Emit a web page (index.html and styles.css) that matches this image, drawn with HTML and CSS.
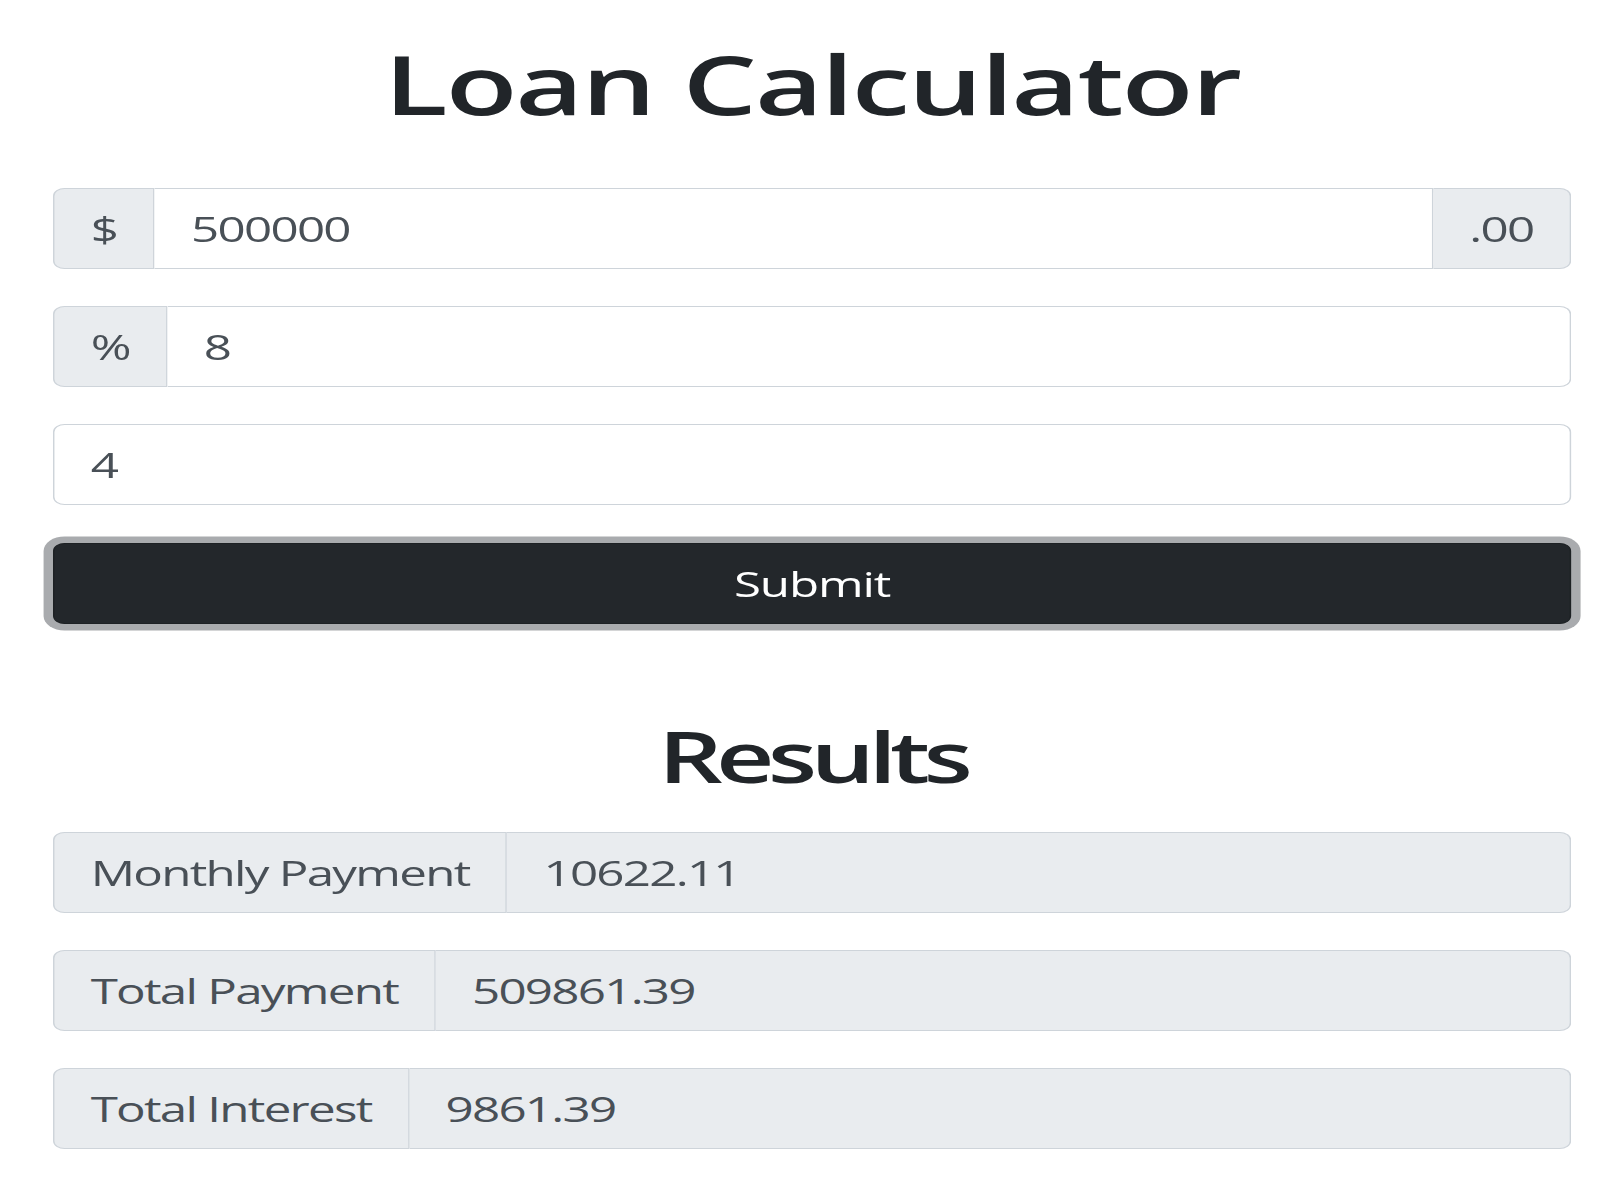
FILE: index.html
```html
<!DOCTYPE html>
<html lang="en">
<head>
<meta charset="utf-8">
<title>Loan Calculator</title>
<link rel="stylesheet" href="styles.css">
</head>
<body>
<div class="container">
  <h1 class="title">Loan Calculator</h1>
  <form class="form">
    <div class="group">
      <span class="addon addon-start">$</span>
      <input class="field field-middle" type="text" value="500000">
      <span class="addon addon-end">.00</span>
    </div>
    <div class="group">
      <span class="addon addon-start">%</span>
      <input class="field field-last" type="text" value="8">
    </div>
    <div class="group">
      <input class="field field-solo" type="text" value="4">
    </div>
    <button class="btn" type="button">Submit</button>
  </form>
  <h2 class="subtitle">Results</h2>
  <div class="results">
    <div class="group">
      <span class="addon addon-start">Monthly Payment</span>
      <input class="field field-last field-readonly" type="text" value="10622.11" readonly>
    </div>
    <div class="group">
      <span class="addon addon-start">Total Payment</span>
      <input class="field field-last field-readonly" type="text" value="509861.39" readonly>
    </div>
    <div class="group">
      <span class="addon addon-start">Total Interest</span>
      <input class="field field-last field-readonly" type="text" value="9861.39" readonly>
    </div>
  </div>
</div>
</body>
</html>
```
FILE: styles.css
```css
html, body {
  margin: 0;
  padding: 0;
  background: #ffffff;
}

body {
  font-family: "Open Sans", "Noto Sans", "Liberation Sans", sans-serif;
  color: #212529;
}

.container {
  width: 1047px;
  margin-left: 53px;
  transform: scaleX(1.45);
  transform-origin: 0 0;
}

.title {
  margin: 35px 0 56px;
  font-size: 81px;
  line-height: 97px;
  font-weight: 600;
  letter-spacing: -1.4px;
  text-align: center;
  color: #212529;
}

.subtitle {
  margin: 90px 0 34px;
  font-size: 70px;
  line-height: 84px;
  font-weight: 600;
  letter-spacing: -4.6px;
  text-align: center;
  color: #212529;
}

.form,
.results {
  display: flex;
  flex-direction: column;
  gap: 37px;
}

.group {
  display: flex;
  height: 81px;
}

.addon {
  display: flex;
  align-items: center;
  padding: 0 25px;
  background: #e9ecef;
  border: 1px solid #ced4da;
  color: #495057;
  font-size: 34px;
  letter-spacing: -1.2px;
  white-space: nowrap;
}

.addon-start {
  border-radius: 8px 0 0 8px;
}

.addon-end {
  border-radius: 0 8px 8px 0;
  border-left: none;
}

.field {
  flex: 1;
  min-width: 0;
  margin: 0;
  padding: 0 25px;
  border: 1px solid #ced4da;
  background: #ffffff;
  color: #495057;
  font-family: inherit;
  font-size: 34px;
  letter-spacing: -1.2px;
  outline: none;
  box-sizing: border-box;
}

.field-middle {
  border-left: none;
  border-radius: 0;
}

.field-last {
  border-left: none;
  border-radius: 0 8px 8px 0;
}

.field-solo {
  border-radius: 8px;
}

.field-readonly {
  background: #e9ecef;
}

.btn {
  height: 81px;
  margin-top: 1px;
  border: 1px solid #1d2124;
  border-radius: 8px;
  background: #23272b;
  color: #ffffff;
  font-family: inherit;
  font-size: 34px;
  font-weight: 500;
  letter-spacing: -0.8px;
  box-shadow: 0 0 0 6.5px #a9abae;
  cursor: pointer;
}
```
